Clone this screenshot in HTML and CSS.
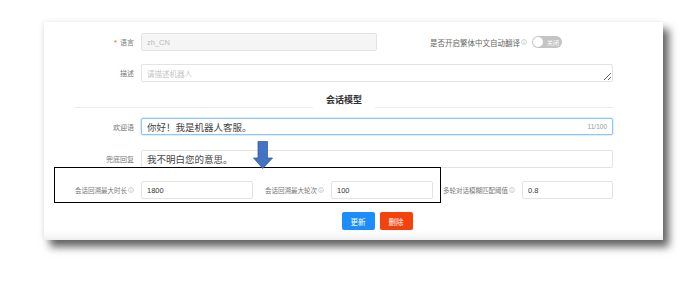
FILE: index.html
```html
<!DOCTYPE html>
<html lang="zh-CN">
<head>
  <meta charset="utf-8">
  <title>机器人设置</title>
  <link rel="stylesheet" href="styles.css">
</head>
<body>
  <div class="page">
    <div class="card">

      <!-- 语言 + 繁体翻译开关 -->
      <div class="row row-lang">
        <label class="field-label"><span class="req">*</span>语言</label>
        <input class="input input-lang" type="text" value="zh_CN" disabled>
        <div class="switch-field">
          <span class="switch-label">是否开启繁体中文自动翻译<svg class="info" viewBox="0 0 8 8"><circle cx="4" cy="4" r="3.3"/><line x1="4" y1="3.4" x2="4" y2="6"/><circle class="dot" cx="4" cy="2.2" r="0.45"/></svg></span>
          <span class="switch"><span class="knob"></span><span class="switch-text">关闭</span></span>
        </div>
      </div>

      <!-- 描述 -->
      <div class="row row-desc">
        <label class="field-label">描述</label>
        <textarea class="input textarea" placeholder="请描述机器人"></textarea>
      </div>

      <!-- 会话模型 -->
      <div class="divider">
        <span class="divider-line"></span>
        <span class="divider-title">会话模型</span>
        <span class="divider-line"></span>
      </div>

      <div class="row row-welcome">
        <label class="field-label">欢迎语</label>
        <div class="input input-big is-focused">
          <span>你好！我是机器人客服。</span>
          <span class="counter">11/100</span>
        </div>
      </div>

      <div class="row row-fallback">
        <label class="field-label">兜底回复</label>
        <div class="input input-big">
          <span>我不明白您的意思。</span>
        </div>
      </div>

      <div class="row row-limits">
        <label class="field-label lbl-1">会话回溯最大时长<svg class="info" viewBox="0 0 8 8"><circle cx="4" cy="4" r="3.3"/><line x1="4" y1="3.4" x2="4" y2="6"/><circle class="dot" cx="4" cy="2.2" r="0.45"/></svg></label>
        <input class="input num-1" type="text" value="1800">
        <label class="field-label lbl-2">会话回溯最大轮次<svg class="info" viewBox="0 0 8 8"><circle cx="4" cy="4" r="3.3"/><line x1="4" y1="3.4" x2="4" y2="6"/><circle class="dot" cx="4" cy="2.2" r="0.45"/></svg></label>
        <input class="input num-2" type="text" value="100">
        <label class="field-label lbl-3">多轮对话模糊匹配阈值<svg class="info" viewBox="0 0 8 8"><circle cx="4" cy="4" r="3.3"/><line x1="4" y1="3.4" x2="4" y2="6"/><circle class="dot" cx="4" cy="2.2" r="0.45"/></svg></label>
        <input class="input num-3" type="text" value="0.8">
      </div>

      <div class="actions">
        <button class="btn btn-primary">更新</button>
        <button class="btn btn-danger">删除</button>
      </div>
    </div>

    <!-- annotations drawn over the screenshot -->
    <div class="mark-box"></div>
    <svg class="mark-arrow" viewBox="0 0 20 28">
      <polygon points="5,0.5 14.5,0.5 14.5,17 19.5,17 9.75,27.5 0.5,17 5,17"/>
    </svg>
  </div>
</body>
</html>
```

FILE: styles.css
```css
/* page blanche, police par défaut */
body {
  margin: 0;
  background: #fff;
  font-family: "Liberation Sans", "Noto Sans CJK SC", sans-serif;
}

.page {
  position: relative;
  width: 699px;
  height: 284px;
  overflow: hidden;
}

/* la carte avec son ombre portée */
.card {
  box-sizing: border-box;
  width: 619px;
  height: 218px;
  margin: 22px 0 0 44px;
  padding: 11px 50px 0 0;
  background: #fff;
  box-shadow: 6px 7px 8px rgba(0, 0, 0, 0.6),
              -1px 0 6px rgba(0, 0, 0, 0.08),
              inset 0 -10px 10px -8px rgba(0, 0, 0, 0.1);
}

/* lignes du formulaire */
.row {
  display: flex;
  align-items: center;
  height: 18px;
}
.row-lang { margin-bottom: 13px; }
.row-desc { margin-bottom: 13px; }
.row-welcome { height: 17px; margin-bottom: 15px; }
.row-fallback { margin-bottom: 13px; }
.row-limits { margin-bottom: 13px; }

.field-label {
  box-sizing: border-box;
  flex: none;
  width: 97px;
  padding-right: 7px;
  text-align: right;
  font-size: 7px;
  color: #777;
  white-space: nowrap;
}
.row-limits .field-label {
  font-size: 6.5px;
}
.req {
  color: #f5522d;
  margin-right: 3px;
  font-size: 8px;
}

.info {
  width: 6px;
  height: 6px;
  margin-left: 1px;
  vertical-align: 0.5px;
}
.info circle {
  fill: none;
  stroke: #aaa;
  stroke-width: 0.7;
}
.info line {
  stroke: #aaa;
  stroke-width: 0.8;
}
.info .dot {
  fill: #aaa;
  stroke: none;
}

/* champs */
.input {
  box-sizing: border-box;
  height: 18px;
  margin: 0;
  padding: 0 5px;
  border: 1px solid #e3e3e3;
  border-radius: 2px;
  background: #fff;
  font-family: inherit;
  font-size: 7.5px;
  color: #333;
  outline: none;
}
.input-lang {
  width: 236px;
  background: #f5f5f5;
  color: #bbb;
}
.textarea {
  width: 472px;
  padding-top: 3px;
  resize: vertical;
}
.textarea::placeholder {
  color: #c4c4c4;
}
.input-big {
  display: flex;
  align-items: center;
  justify-content: space-between;
  width: 472px;
  font-size: 9.5px;
  color: #444;
}
.row-welcome .input-big { height: 17px; }
.is-focused {
  border-color: #8cc4fb;
  box-shadow: 0 0 0 1px rgba(24, 144, 255, 0.15);
}
.counter {
  font-size: 6.5px;
  color: #999;
}

.num-1 { width: 112px; }
.num-2 { width: 102px; }
.num-3 { width: 91px; }
.lbl-2 { width: 78px; }
.lbl-3 { width: 89px; }

/* interrupteur */
.switch-field {
  flex: 1;
  display: flex;
  align-items: center;
  justify-content: flex-end;
  padding-right: 51px;
}
.switch-label {
  font-size: 7.5px;
  color: #666;
  white-space: nowrap;
}
.switch {
  display: flex;
  align-items: center;
  box-sizing: border-box;
  width: 30px;
  height: 12px;
  margin-left: 5px;
  padding: 1px;
  border-radius: 6px;
  background: #c4c4c4;
}
.knob {
  width: 10px;
  height: 10px;
  border-radius: 50%;
  background: #fff;
}
.switch-text {
  margin-left: 4px;
  font-size: 6px;
  color: #fff;
}

/* titre de section */
.divider {
  display: flex;
  align-items: flex-end;
  height: 14px;
  margin: 0 0 9px 31px;
}
.divider-line {
  flex: 1;
  height: 1px;
  margin-bottom: 1px;
  background: #ececec;
}
.divider-title {
  padding: 0 13px 3px;
  font-size: 9px;
  font-weight: bold;
  color: #333;
}

/* boutons */
.actions {
  display: flex;
  justify-content: center;
  gap: 5px;
  margin-left: 97px;
}
.btn {
  width: 33px;
  height: 18px;
  padding: 0;
  border: none;
  border-radius: 2px;
  font-family: inherit;
  font-size: 7.5px;
  color: #fff;
}
.btn-primary { background: #1c8dfb; }
.btn-danger { background: #f5420c; }

/* annotations */
.mark-box {
  position: absolute;
  left: 54px;
  top: 167px;
  width: 385px;
  height: 34px;
  border: 1.5px solid #000;
}
.mark-arrow {
  position: absolute;
  left: 253px;
  top: 141px;
  width: 20px;
  height: 28px;
}
.mark-arrow polygon {
  fill: #4472c4;
  stroke: #2f528f;
  stroke-width: 0.7;
}
```
